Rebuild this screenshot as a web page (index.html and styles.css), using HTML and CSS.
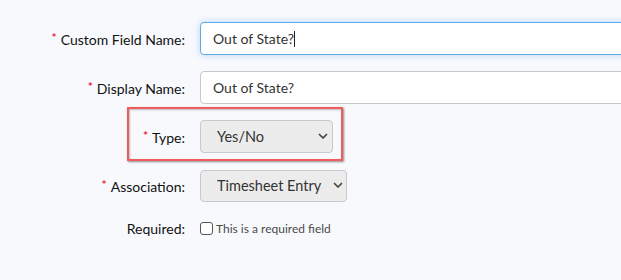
FILE: index.html
```html
<!DOCTYPE html>
<html>
<head>
<meta charset="utf-8">
<link rel="stylesheet" href="styles.css">
</head>
<body>
<form class="form">
  <div class="row">
    <label class="label"><span class="req">*</span>Custom Field Name:</label>
    <div class="control"><input class="input focus" type="text" value="Out of State?"><span class="caret"></span></div>
  </div>
  <div class="row">
    <label class="label"><span class="req">*</span>Display Name:</label>
    <div class="control"><input class="input" type="text" value="Out of State?"></div>
  </div>
  <div class="row highlight">
    <label class="label"><span class="req">*</span>Type:</label>
    <div class="control">
      <div class="select-wrap w-type">
        <select class="select"><option>Yes/No</option></select>
        <svg class="chev" width="10" height="7" viewBox="0 0 10 7"><path d="M1.5 1.5 L5 5 L8.5 1.5" fill="none" stroke="#444" stroke-width="1.7" stroke-linecap="round" stroke-linejoin="round"/></svg>
      </div>
    </div>
  </div>
  <div class="row">
    <label class="label"><span class="req">*</span>Association:</label>
    <div class="control">
      <div class="select-wrap w-assoc">
        <select class="select"><option>Timesheet Entry</option></select>
        <svg class="chev" width="10" height="7" viewBox="0 0 10 7"><path d="M1.5 1.5 L5 5 L8.5 1.5" fill="none" stroke="#444" stroke-width="1.7" stroke-linecap="round" stroke-linejoin="round"/></svg>
      </div>
    </div>
  </div>
  <div class="row short">
    <label class="label">Required:</label>
    <div class="control check">
      <span class="box"></span><span class="check-text">This is a required field</span>
    </div>
  </div>
</form>
</body>
</html>
```
FILE: styles.css
```css
html, body {
  margin: 0;
  padding: 0;
  background: #f8f9fd;
  overflow: hidden;
}
body {
  font-family: Lato, "Open Sans", sans-serif;
  color: #222;
}
.form {
  display: flex;
  flex-direction: column;
  gap: 16px;
  padding-top: 22px;
}
.row {
  display: grid;
  grid-template-columns: 185px 1fr;
  column-gap: 15px;
  align-items: center;
  height: 33px;
  position: relative;
}
.row.short {
  height: 20px;
}
.label {
  text-align: right;
  font-size: 14px;
  color: #111;
  white-space: nowrap;
}
.req {
  color: #e8263a;
  font-size: 12px;
  font-weight: bold;
  vertical-align: 3px;
  margin-right: 4px;
}
.control {
  display: flex;
  align-items: center;
  position: relative;
}
.input {
  box-sizing: border-box;
  width: 440px;
  height: 33px;
  border: 1px solid #c8c8c8;
  border-radius: 4px;
  background: #fff;
  padding: 0 12px;
  font-family: Lato, "Open Sans", sans-serif;
  font-size: 14px;
  color: #333;
  outline: none;
}
.input.focus {
  border-color: #5eaae6;
  box-shadow: 0 0 6px rgba(94, 170, 230, 0.45);
}
.caret {
  position: absolute;
  left: 94px;
  top: 9px;
  width: 1px;
  height: 16px;
  background: #222;
}
.select-wrap {
  position: relative;
}
.w-type { width: 133px; }
.w-assoc { width: 147px; }
.select {
  appearance: none;
  -webkit-appearance: none;
  box-sizing: border-box;
  width: 100%;
  height: 33px;
  border: 1px solid #c9c9c9;
  border-radius: 4px;
  background: #ececec;
  padding: 0 24px 0 16px;
  font-family: Lato, "Open Sans", sans-serif;
  font-size: 14.5px;
  color: #333;
  outline: none;
}
.w-assoc .select { height: 32px; }
.chev {
  position: absolute;
  right: 5px;
  top: 13px;
  pointer-events: none;
}
.w-assoc .chev { right: 4px; top: 12px; }
.highlight::after {
  content: "";
  position: absolute;
  left: 127px;
  width: 216px;
  top: -13px;
  bottom: -8px;
  box-sizing: border-box;
  border: 2px solid #f15b5b;
  box-shadow: 1px 1px 2px rgba(0, 0, 0, 0.45), inset 1px 1px 2px rgba(0, 0, 0, 0.25);
  pointer-events: none;
}
.check {
  gap: 3px;
}
.box {
  box-sizing: border-box;
  width: 13px;
  height: 13px;
  border: 1px solid #555;
  border-radius: 3px;
  background: #fff;
}
.check-text {
  font-size: 12px;
  color: #4a4a4a;
}
```
